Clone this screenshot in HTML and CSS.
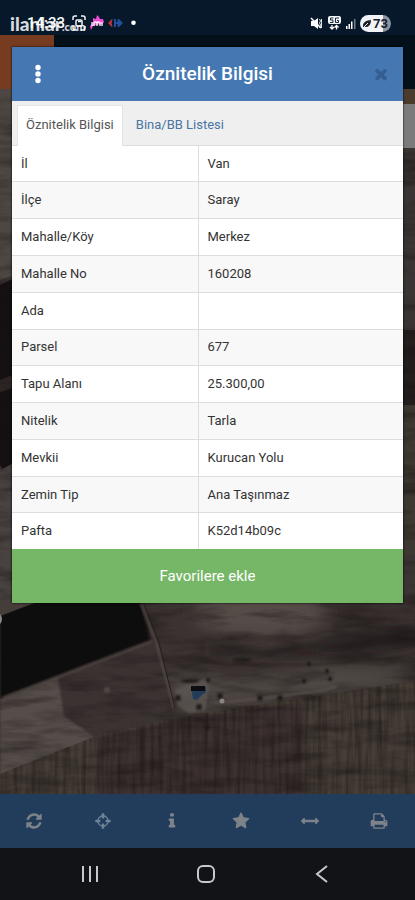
FILE: index.html
```html
<!DOCTYPE html>
<html lang="tr">
<head>
<meta charset="utf-8">
<meta name="viewport" content="width=device-width, initial-scale=1">
<title>Öznitelik Bilgisi</title>
<link rel="stylesheet" href="styles.css">
</head>
<body>
<header class="status">
  <div class="status-left">
    <span class="clock">14:33</span>
    <svg class="status-icons" width="64" height="18" viewBox="72 14 64 18" aria-hidden="true">
      <g fill="none" stroke="#f2f4f6" stroke-width="1.5">
        <path d="M73 20v-2q0-2 2-2h2M81 16h2q2 0 2 2v2M85 26v2q0 2-2 2h-2M77 30h-2q-2 0-2-2v-2"/>
        <rect x="76" y="20" width="6" height="6" rx="1"/><path d="M78 21.500h3"/>
      </g>
      <path d="M93 18l3 1 1-4 2 2 1 2 3 0 1 3-2 2-6 1-3 1-2 4-1-4 3-3z" fill="#f04bd6"/>
      <path d="M92 26v-4M94 26v-3q0-1 1.500-1t1.500 1v3M97 23q0-1 1.500-1t1.500 1v3M102 22v4" fill="none" stroke="#fff" stroke-width="1.300"/>
      <path d="M112 19.500l-3.500 3.500 3.500 3.500-1-3.500z" fill="#b9393c" stroke="#b9393c"/>
      <path d="M115 19v8M118.500 19.500v7M115 23h5M118 19.500l3.500 3.500-3.500 3.500" fill="none" stroke="#23509c" stroke-width="2"/>
      <circle cx="133.500" cy="22.700" r="2.300" fill="#fff"/>
    </svg>
    <span class="watermark">ilanlar<small>.com</small></span>
  </div>
  <div class="status-right">
    <svg width="46" height="16" viewBox="310 15 46 16" aria-hidden="true">
      <path d="M311 20h3l4-3v11l-4-3h-3z" fill="#fff"/>
      <path d="M311 17l10 10" stroke="#fff" stroke-width="1.500"/>
      <path d="M319.500 18l1 2-1 2 1 2-1 3M321.500 18v9" fill="none" stroke="#dfe3e8"/>
      <rect x="328" y="15" width="13" height="8" rx="2" fill="#f4f5f7"/>
      <path d="M333.500 17h-3v2h2.500v2.500h-3M339 17h-3.500v4.500h3v-2h-1.500" fill="none" stroke="#16283a"/>
      <path d="M332 24v4M330 26l2 2 2-2M336.500 28.500v-4M334.500 26.500l2-2 2 2" fill="none" stroke="#fff" stroke-width="1.300"/>
      <g fill="#fff"><rect x="346" y="25" width="1.500" height="3"/><rect x="348.500" y="23" width="1.500" height="5"/><rect x="351" y="20.500" width="1.500" height="7.500"/><rect x="354" y="18" width="1.500" height="10" fill="#75808e"/></g>
    </svg>
    <span class="battery">
      <svg width="8" height="8" viewBox="0 0 8 8" aria-hidden="true"><path d="M0 7Q-1 1 8 0Q8 8 1 7z" fill="#17202b"/><path d="M0 8l5-5" stroke="#f1f3f8"/></svg>73</span>
  </div>
</header>

<main class="app">
  <svg class="map" viewBox="0 35 415 759" preserveAspectRatio="none" aria-hidden="true">
    <defs>
      <clipPath id="field"><path d="M0 774l96-38 90-20 229-35v113H0z"/></clipPath>
      <filter id="soft" x="-10%" y="-10%" width="120%" height="120%"><feGaussianBlur stdDeviation="1.200"/></filter>
      <filter id="haze" x="-30%" y="-60%" width="160%" height="220%"><feGaussianBlur stdDeviation="8"/></filter>
      <filter id="rows" x="0" y="0" width="100%" height="100%" color-interpolation-filters="sRGB"><feTurbulence type="fractalNoise" baseFrequency="0.22 0.014" numOctaves="3" seed="4"/><feColorMatrix values="0 0 0 0 .1  0 0 0 0 .08  0 0 0 0 .07  1.800 0 0 0 -.7"/></filter>
      <filter id="soil" x="0" y="0" width="100%" height="100%" color-interpolation-filters="sRGB"><feTurbulence type="fractalNoise" baseFrequency="0.018 0.090" numOctaves="4" seed="9"/><feColorMatrix values="0 0 0 0 .08  0 0 0 0 .06  0 0 0 0 .06  1.800 0 0 0 -.75"/></filter>
    </defs>
    <rect y="35" width="415" height="759" fill="#3a3432"/>
    <path d="M0 89h30v180L0 280z" fill="#4c4742"/>
    <path d="M0 285l30-15v245L0 465z" fill="#151112"/>
    <path d="M0 380l30-12v15L0 392z" fill="#2d2624"/>
    <path d="M0 470l30-15v145H0z" fill="#484240"/>
    <path d="M400 330h15v75h-15z" fill="#241e1d"/>
    <path d="M400 405h15v150h-15z" fill="#3d3831"/>
    <path d="M140 600h275v130H170z" fill="#3b3331"/>
    <ellipse cx="260" cy="614" rx="65" ry="25" fill="#554c47" filter="url(#haze)"/>
    <path d="M205 642q70 16 120 0t95-12v14q-110 20-215 8z" fill="#241d1d" filter="url(#haze)"/>
    <path d="M168 670l30 8 55 3 75-16 80 6v12l-110 15-70 5-52 14z" fill="#504844" filter="url(#haze)"/>
    <path d="M0 697l151-57 25 68-80 33-44 13L0 774z" fill="#3a3230" filter="url(#soft)"/>
    <path d="M0 699l58-22 6 39 33 23L0 775z" fill="#544e4a" filter="url(#soft)"/>
    <path d="M0 774l96-38 90-20 229-35v113H0z" fill="#453d36"/>
    <path d="M98 737l90-20 115-14v91H98z" fill="#3c3330" filter="url(#soft)"/>
    <rect y="89" width="415" height="705" filter="url(#soil)" opacity=".600"/>
    <g clip-path="url(#field)"><rect y="681" width="415" height="113" filter="url(#rows)" opacity=".600"/></g>
    <path d="M0 615L50 596h90l10 44L0 698z" fill="#0d0a0b" filter="url(#soft)"/>
    <path d="M0 600h42L0 616z" fill="#443d3a"/>
    <path d="M141 604l15 38 18 66" fill="none" stroke="#564c48" stroke-width="2" filter="url(#soft)"/>
    <path d="M144 604l15 39 16 65" fill="none" stroke="#241d1c"/>
    <path d="M3 698l150-57" fill="none" stroke="#4e4541" stroke-width="2" filter="url(#soft)"/>
    <path d="M215 703l60-6 50-7 12-4" fill="none" stroke="#58504b" stroke-width="2" filter="url(#soft)"/>
    <path d="M175 690l14-7 17-4 3 8-4 24-16 2-12-8z" fill="#5b5551" opacity=".800" filter="url(#soft)"/>
    <path d="M191 687h15v5l-4 3-5 5-4-1z" fill="#233c58"/>
    <path d="M191 686h14v5h-14z" fill="#0b0d13"/>
    <g fill="#211b1b" filter="url(#soft)"><circle cx="178" cy="698" r="3"/><circle cx="199" cy="707" r="3"/><circle cx="208" cy="680" r="2"/><circle cx="220" cy="696" r="3"/><circle cx="260" cy="698" r="3"/><circle cx="280" cy="698" r="3"/><circle cx="309" cy="664" r="2"/><circle cx="327" cy="671" r="2"/><circle cx="330" cy="679" r="2"/><circle cx="304" cy="681" r="2"/><ellipse cx="242" cy="660" rx="9" ry="2"/><circle cx="207" cy="727" r="3"/><ellipse cx="190" cy="681" rx="9" ry="2"/></g>
    <circle cx="222" cy="701" r="2.500" fill="#89847f"/>
    <circle cx="107" cy="690" r="3" fill="#514844" filter="url(#soft)"/>
    <circle cx="-5" cy="619" r="7" fill="#8c8a88"/>
    <rect y="35" width="415" height="54" fill="#031019"/>
    <rect y="35" width="54" height="54" fill="#773c20"/>
    <path d="M400 89h15v15h-15z" fill="#4b3b2d"/>
    <path d="M400 104h15v44h-15z" fill="#7b7b7b"/>
  </svg>

  <section class="modal" role="dialog" aria-labelledby="title">
    <div class="modal-head">
      <button class="icon-btn" type="button" aria-label="Menü"><svg width="6" height="20" viewBox="0 0 6 20"><g fill="#fff"><circle cx="3" cy="3.500" r="2.700"/><circle cx="3" cy="10" r="2.700"/><circle cx="3" cy="16.500" r="2.700"/></g></svg></button>
      <h1 id="title">Öznitelik Bilgisi</h1>
      <button class="icon-btn" type="button" aria-label="Kapat"><svg width="18" height="18" viewBox="0 0 1792 1792"><path fill="#355f90" d="M1490 1322q0 40-28 68l-136 136q-28 28-68 28t-68-28l-294-294-294 294q-28 28-68 28t-68-28l-136-136q-28-28-28-68t28-68l294-294-294-294q-28-28-28-68t28-68l136-136q28-28 68-28t68 28l294 294 294-294q28-28 68-28t68 28l136 136q28 28 28 68t-28 68l-294 294 294 294q28 28 28 68z"/></svg></button>
    </div>
    <nav class="tabs">
      <a class="tab active" href="#bilgi">Öznitelik Bilgisi</a>
      <a class="tab" href="#bina">Bina/BB Listesi</a>
    </nav>
    <table class="info" id="bilgi">
      <tbody>
        <tr><th scope="row">İl</th><td>Van</td></tr>
        <tr><th scope="row">İlçe</th><td>Saray</td></tr>
        <tr><th scope="row">Mahalle/Köy</th><td>Merkez</td></tr>
        <tr><th scope="row">Mahalle No</th><td>160208</td></tr>
        <tr><th scope="row">Ada</th><td></td></tr>
        <tr><th scope="row">Parsel</th><td>677</td></tr>
        <tr><th scope="row">Tapu Alanı</th><td>25.300,00</td></tr>
        <tr><th scope="row">Nitelik</th><td>Tarla</td></tr>
        <tr><th scope="row">Mevkii</th><td>Kurucan Yolu</td></tr>
        <tr><th scope="row">Zemin Tip</th><td>Ana Taşınmaz</td></tr>
        <tr><th scope="row">Pafta</th><td>K52d14b09c</td></tr>
      </tbody>
    </table>
    <button class="favorite" type="button">Favorilere ekle</button>
  </section>
</main>

<nav class="toolbar">
  <button type="button" aria-label="Yenile"><svg viewBox="0 0 1792 1792"><path d="M1639 1056q0 5-1 7-64 268-268 434.500t-478 166.500q-146 0-282.500-55t-243.500-157l-129 129q-19 19-45 19t-45-19-19-45v-448q0-26 19-45t45-19h448q26 0 45 19t19 45-19 45l-137 137q71 66 161 102t187 36q134 0 250-65t186-179q11-17 53-117 8-23 30-23h192q13 0 22.500 9.500t9.500 22.500zm25-800v448q0 26-19 45t-45 19h-448q-26 0-45-19t-19-45 19-45l138-138q-148-137-349-137-134 0-250 65t-186 179q-11 17-53 117-8 23-30 23h-199q-13 0-22.500-9.500t-9.500-22.500v-7q65-268 270-434.500t480-166.500q146 0 284 55.500t245 156.500l130-129q19-19 45-19t45 19 19 45z"/></svg></button>
  <button type="button" aria-label="Konum" class="locate"><svg viewBox="0 0 1792 1792"><path d="M1325 1024h-109q-26 0-45-19t-19-45v-128q0-26 19-45t45-19h109q-32-108-112.500-188.500t-188.500-112.500v109q0 26-19 45t-45 19h-128q-26 0-45-19t-19-45v-109q-108 32-188.500 112.500t-112.500 188.500h109q26 0 45 19t19 45v128q0 26-19 45t-45 19h-109q32 108 112.500 188.500t188.500 112.500v-109q0-26 19-45t45-19h128q26 0 45 19t19 45v109q108-32 188.500-112.500t112.500-188.500zm339-192v128q0 26-19 45t-45 19h-143q-37 161-154.500 278.500t-278.500 154.500v143q0 26-19 45t-45 19h-128q-26 0-45-19t-19-45v-143q-161-37-278.500-154.500t-154.500-278.500h-143q-26 0-45-19t-19-45v-128q0-26 19-45t45-19h143q37-161 154.500-278.500t278.500-154.500v-143q0-26 19-45t45-19h128q26 0 45 19t19 45v143q161 37 278.500 154.500t154.500 278.500h143q26 0 45 19t19 45z"/></svg></button>
  <button type="button" aria-label="Bilgi"><svg viewBox="0 0 1792 1792"><path d="M1216 1344v128q0 26-19 45t-45 19h-512q-26 0-45-19t-19-45v-128q0-26 19-45t45-19h64v-384h-64q-26 0-45-19t-19-45v-128q0-26 19-45t45-19h384q26 0 45 19t19 45v576h64q26 0 45 19t19 45zm-128-1152v192q0 26-19 45t-45 19h-256q-26 0-45-19t-19-45v-192q0-26 19-45t45-19h256q26 0 45 19t19 45z"/></svg></button>
  <button type="button" aria-label="Favoriler"><svg viewBox="0 0 1792 1792"><path d="M1728 647q0 22-26 48l-363 354 86 500q1 7 1 20 0 21-10.500 35.500t-30.500 14.500q-19 0-40-12l-449-236-449 236q-22 12-40 12-21 0-31.500-14.500t-10.500-35.500q0-6 2-20l86-500-364-354q-25-27-25-48 0-37 56-46l502-73 225-455q19-41 49-41t49 41l225 455 502 73q56 9 56 46z"/></svg></button>
  <button type="button" aria-label="Ölçüm"><svg viewBox="0 0 1792 1792"><path d="M1792 896q0 26-19 45l-256 256q-19 19-45 19t-45-19-19-45v-128h-1024v128q0 26-19 45t-45 19-45-19l-256-256q-19-19-19-45t19-45l256-256q19-19 45-19t45 19 19 45v128h1024v-128q0-26 19-45t45-19 45 19l256 256q19 19 19 45z"/></svg></button>
  <button type="button" aria-label="Yazdır"><svg viewBox="0 0 1792 1792"><path d="M448 1536h896v-256h-896v256zm0-640h896v-384h-160q-40 0-68-28t-28-68v-160h-640v640zm1152 64q0-26-19-45t-45-19-45 19-19 45 19 45 45 19 45-19 19-45zm128 0v416q0 13-9.500 22.500t-22.500 9.500h-224v160q0 40-28 68t-68 28h-960q-40 0-68-28t-28-68v-160h-224q-13 0-22.500-9.500t-9.500-22.500v-416q0-79 56.500-135.500t135.500-56.500h64v-544q0-40 28-68t68-28h672q40 0 88 20t76 48l152 152q28 28 48 76t20 88v256h64q79 0 135.500 56.500t56.500 135.500z"/></svg></button>
</nav>

<footer class="system-nav">
  <button type="button" aria-label="Son uygulamalar"><svg viewBox="0 0 20 20"><path d="M3 2v16M10 2v16M17 2v16"/></svg></button>
  <button type="button" aria-label="Ana ekran"><svg viewBox="0 0 20 20"><rect x="2" y="2" width="16" height="16" rx="5"/></svg></button>
  <button type="button" aria-label="Geri"><svg viewBox="0 0 20 20"><path d="M15 2L5 10l10 8"/></svg></button>
</footer>
</body>
</html>
```
FILE: styles.css
```css
* { box-sizing: border-box; }
body {
  margin: 0;
  min-height: 100vh;
  display: flex;
  flex-direction: column;
  background: #111316;
  color: #333;
  font-family: Roboto, "Noto Sans", sans-serif;
  font-size: 13px;
  line-height: 20px;
}
button {
  margin: 0;
  padding: 0;
  border: 0;
  background: none;
  font: inherit;
}
svg { display: block; }

.status {
  display: flex;
  justify-content: space-between;
  align-items: flex-end;
  height: 35px;
  padding: 0 24px 3px 27px;
  background: #07182b;
  color: #fff;
}
.status-left {
  position: relative;
  display: flex;
  align-items: center;
  gap: 7px;
}
.clock {
  font-size: 15px;
  font-weight: 500;
  line-height: 18px;
}
.watermark {
  position: absolute;
  left: -17px;
  top: 0;
  color: rgba(255, 255, 255, .85);
  font-family: Lato, sans-serif;
  font-size: 19px;
  font-weight: 900;
  line-height: 20px;
}
.watermark small { font-size: 11px; }
.status-right {
  display: flex;
  align-items: center;
  gap: 4px;
}
.battery {
  display: flex;
  align-items: center;
  justify-content: center;
  gap: 2px;
  width: 31px;
  height: 17px;
  border-radius: 9px;
  background: linear-gradient(90deg, #f1f3f8 73%, #8c949f 73%);
  color: #17202b;
  font-size: 13px;
  font-weight: 700;
}

.app {
  position: relative;
  flex: 1;
  padding: 12px 12px 24px;
}
.map {
  position: absolute;
  inset: 0;
  width: 100%;
  height: 100%;
}
.modal {
  position: relative;
  background: #fff;
  box-shadow: 0 0 2px #000;
}
.modal-head {
  display: flex;
  align-items: center;
  justify-content: space-between;
  height: 54px;
  padding: 0 13px 0 17px;
  background: #4578b3;
  color: #fff;
}
.icon-btn {
  display: grid;
  place-items: center;
  width: 18px;
  height: 24px;
}
h1 {
  flex: 1;
  margin: 0;
  padding-right: 4px;
  font-size: 19px;
  font-weight: 500;
  line-height: 24px;
  text-align: center;
}
.tabs {
  display: flex;
  height: 45px;
  padding: 4px 5px 0;
  background: #efefef;
  border-bottom: 1px solid #ddd;
}
.tab {
  padding: 9px 8px;
  color: #4a75a3;
  text-decoration: none;
  border: solid transparent;
  border-width: 1px 1px 0;
}
.tab.active {
  margin-bottom: -1px;
  background: #fff;
  border-color: #e4e4e4;
  color: #555;
}
.tab + .tab { padding-left: 12px; }

.info {
  width: 100%;
  height: 403px;
  border-collapse: collapse;
  table-layout: fixed;
}
.info th, .info td {
  padding: 0 9px;
  border-bottom: 1px solid #ddd;
  font-weight: 400;
  text-align: left;
}
.info th {
  width: 186px;
  border-right: 1px solid #ddd;
}
.info tr:nth-child(even) { background: #f8f8f8; }
.info tr:last-child > * { border-bottom: 0; }
.favorite {
  display: block;
  width: 100%;
  height: 54px;
  background: #76b767;
  color: #fff;
  font-size: 15px;
}

.toolbar {
  display: grid;
  grid-template-columns: repeat(6, 1fr);
  height: 54px;
  padding-right: 2px;
  background: #223d5c;
}
.toolbar button, .system-nav button {
  display: grid;
  place-items: center;
}
.toolbar svg {
  width: 18px;
  height: 18px;
  fill: #7d8389;
}
.toolbar .locate svg { fill: #6f8296; }

.system-nav {
  display: flex;
  justify-content: center;
  gap: 96px;
  height: 52px;
  padding-right: 4px;
  background: #111316;
}
.system-nav svg {
  width: 20px;
  height: 20px;
  fill: none;
  stroke: #c8c9cb;
  stroke-width: 2;
}
```
